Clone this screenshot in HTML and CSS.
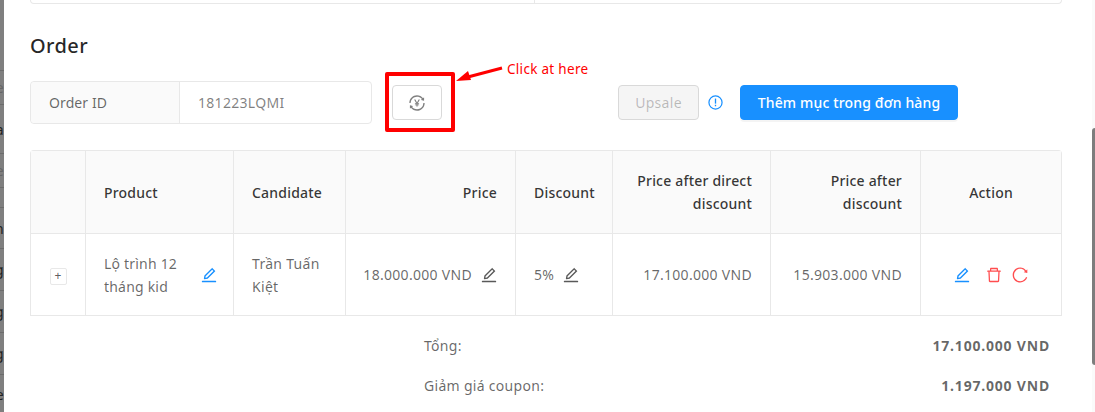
FILE: index.html
```html
<!DOCTYPE html>
<html lang="en">
<head>
    <meta charset="UTF-8">
    <meta name="viewport" content="width=device-width, initial-scale=1.0">
    <title>Order</title>
    <link rel="stylesheet" href="styles.css">
</head>
<body>
    <!-- Trang phía sau lớp phủ -->
    <div class="backdrop">
        <div class="backdrop-row r2">e</div>
        <div class="backdrop-row r1">a</div>
        <div class="backdrop-row r2">e</div>
        <div class="backdrop-row r6"></div>
        <div class="backdrop-row r3">n</div>
        <div class="backdrop-row r4">g</div>
        <div class="backdrop-row r4">g</div>
        <div class="backdrop-row r4">g</div>
        <div class="backdrop-row r5">e</div>
    </div>

    <main class="modal">
        <div class="summary-box"><div class="summary-cell first"></div><div class="summary-cell"></div></div>

        <h2 class="section-title">Order</h2>

        <div class="toolbar">
            <div class="input-group">
                <div class="input-label">Order ID</div>
                <div class="input-value">181223LQMI</div>
            </div>
            <button class="btn btn-icon">
                <svg class="icon" viewBox="64 64 896 896" fill="currentColor"><path d="M668.6 320c0-4.4-3.6-8-8-8h-54.5c-3 0-5.8 1.7-7.1 4.4l-84.7 168.8H511l-84.7-168.8a8 8 0 0 0-7.1-4.4h-55.7c-1.3 0-2.6.3-3.8 1-3.9 2.1-5.3 7-3.2 10.8l103.9 191.6h-57c-4.4 0-8 3.6-8 8v27.1c0 4.4 3.6 8 8 8h76v39h-76c-4.4 0-8 3.6-8 8v27.1c0 4.4 3.6 8 8 8h76V704c0 4.4 3.6 8 8 8h49.9c4.4 0 8-3.6 8-8v-63.5h76.3c4.4 0 8-3.6 8-8v-27.1c0-4.4-3.6-8-8-8h-76.3v-39h76.3c4.4 0 8-3.6 8-8v-27.1c0-4.4-3.6-8-8-8H564l103.7-191.6c.5-1.1.9-2.4.9-3.7zM157.9 504.2a352.7 352.7 0 0 1 103.5-242.4c32.5-32.5 70.3-58.1 112.4-75.9 43.6-18.4 89.9-27.8 137.6-27.8 47.8 0 94.1 9.3 137.6 27.8 42.1 17.8 79.9 43.4 112.4 75.9 10 10 19.3 20.5 27.9 31.4l-50 39.1a8 8 0 0 0 3 14.1l156.8 38.3c5 1.2 9.9-2.6 9.9-7.7l.8-161.5c0-6.7-7.7-10.5-12.9-6.3l-47.8 37.4C770.7 146.3 648.6 82 511.5 82 277 82 86.3 270.1 82 503.8a8 8 0 0 0 8 8.2h60c4.3 0 7.8-3.5 7.9-7.8zM934 512h-60c-4.3 0-7.9 3.5-8 7.8a353.24 353.24 0 0 1-103.5 242.4 352.57 352.57 0 0 1-112.4 75.9c-43.6 18.4-89.9 27.8-137.6 27.8s-94.1-9.3-137.6-27.8a352.57 352.57 0 0 1-112.4-75.9c-10-10-19.3-20.5-27.9-31.4l49.9-39.1a8 8 0 0 0-3-14.1l-156.8-38.3c-5-1.2-9.9 2.6-9.9 7.7l-.8 161.7c0 6.7 7.7 10.5 12.9 6.3l47.8-37.4C253.3 877.7 375.4 942 512.5 942 747 942 937.7 753.9 942 520.2a8 8 0 0 0-8-8.2z"/></svg>
            </button>
            <button class="btn btn-disabled">Upsale</button>
            <svg class="icon-info" viewBox="0 0 16 16" fill="none"><circle cx="8" cy="8" r="7" stroke="#1890ff" stroke-width="1.3"/><rect x="7.3" y="3.8" width="1.4" height="5.4" fill="#1890ff"/><rect x="7.3" y="10.4" width="1.4" height="1.6" fill="#1890ff"/></svg>
            <button class="btn btn-primary">Thêm mục trong đơn hàng</button>
        </div>

        <table class="order-table">
            <thead>
                <tr>
                    <th class="col-expand"></th>
                    <th class="col-product">Product</th>
                    <th class="col-candidate">Candidate</th>
                    <th class="col-price right">Price</th>
                    <th class="col-discount">Discount</th>
                    <th class="col-direct right">Price after direct discount</th>
                    <th class="col-after right">Price after discount</th>
                    <th class="col-action center">Action</th>
                </tr>
            </thead>
            <tbody>
                <tr>
                    <td class="center"><button class="expand-btn">+</button></td>
                    <td>
                        <div class="cell-edit between">
                            <span class="product-name">Lộ trình 12 tháng kid</span>
                            <svg class="icon blue" viewBox="64 64 896 896" fill="currentColor"><use href="#edit-icon"/></svg>
                        </div>
                    </td>
                    <td>Trần Tuấn Kiệt</td>
                    <td class="right">
                        <div class="cell-edit end">18.000.000 VND
                            <svg class="icon dark" viewBox="64 64 896 896" fill="currentColor"><use href="#edit-icon"/></svg>
                        </div>
                    </td>
                    <td>
                        <div class="cell-edit">5%
                            <svg class="icon dark" viewBox="64 64 896 896" fill="currentColor"><use href="#edit-icon"/></svg>
                        </div>
                    </td>
                    <td class="right">17.100.000 VND</td>
                    <td class="right">15.903.000 VND</td>
                    <td>
                        <div class="actions">
                            <svg class="icon blue action-edit" viewBox="64 64 896 896" fill="currentColor"><use href="#edit-icon"/></svg>
                            <svg class="icon red" viewBox="64 64 896 896" fill="currentColor"><path d="M360 184h-8c4.4 0 8-3.6 8-8v8h304v-8c0 4.4 3.6 8 8 8h-8v72h72v-80c0-35.3-28.7-64-64-64H352c-35.3 0-64 28.7-64 64v80h72v-72zm504 72H160c-17.7 0-32 14.3-32 32v32c0 4.4 3.6 8 8 8h60.4l24.7 523c1.6 34.1 29.8 61 63.9 61h454c34.2 0 62.3-26.8 63.9-61l24.7-523H888c4.4 0 8-3.6 8-8v-32c0-17.7-14.3-32-32-32zM731.3 840H292.7l-24.2-512h487l-24.2 512z"/></svg>
                            <svg class="icon red" viewBox="64 64 896 896" fill="currentColor"><path d="M909.1 209.3l-56.4 44.1C775.8 155.1 656.2 92 521.9 92 290 92 102.3 279.5 102 511.5 101.7 743.7 289.8 932 521.9 932c181.3 0 335.8-115 394.6-276.1 1.5-4.2-.7-8.9-4.9-10.3l-56.7-19.5a8 8 0 0 0-10.1 4.8c-1.8 5-3.8 10-5.9 14.9-17.3 41-42.1 77.8-73.7 109.4A344.77 344.77 0 0 1 655.9 829c-42.3 17.9-87.4 27-133.8 27-46.5 0-91.5-9.1-133.8-27A341.5 341.5 0 0 1 279 755.2a342.16 342.16 0 0 1-73.7-109.4c-17.9-42.4-27-87.4-27-133.9s9.1-91.5 27-133.9c17.3-41 42.1-77.8 73.7-109.4 31.6-31.6 68.4-56.4 109.3-73.8 42.3-17.9 87.4-27 133.8-27 46.5 0 91.5 9.1 133.8 27a341.5 341.5 0 0 1 109.3 73.8c9.9 9.9 19.2 20.4 27.8 31.4l-60.2 47a8 8 0 0 0 3 14.1l175.6 43c5 1.2 9.9-2.6 9.9-7.7l.8-180.9c-.1-6.6-7.8-10.3-13-6.2z"/></svg>
                        </div>
                    </td>
                </tr>
            </tbody>
        </table>

        <div class="totals">
            <div class="total-row"><span>Tổng:</span><strong>17.100.000 VND</strong></div>
            <div class="total-row"><span>Giảm giá coupon:</span><strong>1.197.000 VND</strong></div>
        </div>
    </main>

    <div class="scroll-track"><div class="scroll-thumb"></div></div>

    <!-- Chú thích màu đỏ vẽ đè lên ảnh chụp -->
    <div class="callout-box"></div>
    <svg class="callout-arrow" viewBox="0 0 50 20"><path d="M46 2 L10 11.5" stroke="#f00" stroke-width="3" fill="none"/><path d="M0 15 L12 5 L15 14 Z" fill="#f00"/></svg>
    <div class="callout-text">Click at here</div>

    <svg class="svg-defs"><defs><path id="edit-icon" d="M257.7 752c2 0 4-.2 6-.5L431.9 722c2-.4 3.9-1.3 5.3-2.8l423.9-423.9a9.96 9.96 0 0 0 0-14.1L694.9 114.9c-1.9-1.9-4.4-2.9-7.1-2.9s-5.2 1-7.1 2.9L256.8 538.8c-1.5 1.5-2.4 3.3-2.8 5.3l-29.5 168.2a33.5 33.5 0 0 0 9.4 29.8c6.6 6.4 14.9 9.9 23.8 9.9zm67.4-174.4L687.8 215l73.3 73.3-362.7 362.6-88.9 15.7 15.6-89zM880 836H144c-17.7 0-32 14.3-32 32v36c0 4.4 3.6 8 8 8h784c4.4 0 8-3.6 8-8v-36c0-17.7-14.3-32-32-32z"/></defs></svg>
</body>
</html>
```

FILE: styles.css
```css
* {
    box-sizing: border-box;
}
html, body {
    height: 412px;
    overflow: hidden;
}
body {
    margin: 0;
    display: flex;
    font-family: "Noto Sans", "Open Sans", sans-serif;
    font-size: 14px;
    letter-spacing: 0.3px;
    color: rgba(0, 0, 0, 0.6);
    background-color: #fff;
}

/* Lớp phủ bên trái */
.backdrop {
    width: 4px;
    flex-shrink: 0;
    background-color: #7f7f7f;
    overflow: hidden;
    padding-top: 70px;
    font-size: 14px;
    color: #222;
    display: flex;
    flex-direction: column;
    align-items: flex-end;
}
.backdrop-row {
    width: 4px;
    flex-shrink: 0;
    display: flex;
    justify-content: flex-start;
    align-items: center;
    border-top: 1px solid #6c6c6c;
    direction: rtl;
}
.r1 { height: 49px; }
.r2 { height: 34px; color: #666; }
.r3 { height: 41px; }
.r4 { height: 42px; }
.r5 { height: 40px; }
.r6 { height: 20px; }

.modal {
    flex: 1;
    min-width: 0;
    padding: 0 30px 0 26px;
}
.summary-box {
    height: 4px;
    display: flex;
    border: 1px solid #e8e8e8;
    border-top: none;
    border-radius: 0 0 4px 4px;
}
.summary-cell {
    flex: 1;
}
.summary-cell.first {
    flex: none;
    width: 504px;
    border-right: 1px solid #e8e8e8;
}
.section-title {
    margin: 28px 0 0;
    height: 28px;
    font-size: 20px;
    line-height: 28px;
    font-weight: 500;
    letter-spacing: 0.4px;
    color: rgba(0, 0, 0, 0.85);
}

/* Thanh công cụ */
.toolbar {
    margin-top: 21px;
    height: 43px;
    padding-right: 104px;
    display: flex;
    align-items: center;
}
.input-group {
    width: 342px;
    height: 43px;
    display: flex;
    border: 1px solid #e8e8e8;
    border-radius: 4px;
}
.input-label {
    width: 149px;
    padding-left: 18px;
    line-height: 42px;
    letter-spacing: 0.1px;
    background-color: #fafafa;
    border-right: 1px solid #e8e8e8;
    border-radius: 4px 0 0 4px;
}
.input-value {
    padding-left: 18px;
    line-height: 42px;
    color: rgba(0, 0, 0, 0.5);
}
.btn {
    height: 35px;
    font-family: inherit;
    font-size: 14px;
    letter-spacing: 0.3px;
    border-radius: 4px;
    padding: 0;
}
.btn-icon {
    width: 50px;
    margin-left: 20px;
    margin-right: auto;
    background-color: #fff;
    border: 1px solid #d9d9d9;
    color: rgba(0, 0, 0, 0.5);
    display: flex;
    align-items: center;
    justify-content: center;
}
.btn-disabled {
    width: 81px;
    background-color: #f5f5f5;
    border: 1px solid #d9d9d9;
    color: rgba(0, 0, 0, 0.25);
}
.icon-info {
    width: 15px;
    height: 15px;
    margin-left: 9px;
}
.btn-primary {
    width: 218px;
    margin-left: 17px;
    letter-spacing: 0.15px;
    background-color: #1890ff;
    border: 1px solid #1890ff;
    color: #fff;
    font-weight: 500;
    box-shadow: 0 2px 0 rgba(0, 0, 0, 0.045);
}
.icon {
    width: 16px;
    height: 16px;
    flex-shrink: 0;
}
.blue { color: #1890ff; }
.dark { color: rgba(0, 0, 0, 0.65); }
.red { color: #ff4d4f; }

/* Bảng đơn hàng */
.order-table {
    width: 1032px;
    margin-top: 26px;
    table-layout: fixed;
    border-collapse: separate;
    border-spacing: 0;
    border: 1px solid #e8e8e8;
    border-bottom: none;
    border-radius: 4px 4px 0 0;
}
.order-table th,
.order-table td {
    padding: 0 18px;
    line-height: 23px;
    text-align: left;
    border-right: 1px solid #e8e8e8;
    border-bottom: 1px solid #e8e8e8;
}
.order-table th:last-child,
.order-table td:last-child {
    border-right: none;
}
.order-table th {
    height: 83px;
    font-weight: 500;
    letter-spacing: 0.2px;
    background-color: #fafafa;
    color: rgba(0, 0, 0, 0.8);
}
.order-table td {
    height: 82px;
}
.order-table .right { text-align: right; }
.order-table .center { text-align: center; }
.col-expand { width: 55px; }
.col-product { width: 148px; }
.col-candidate { width: 112px; }
.col-price { width: 170px; }
.col-discount { width: 97px; }
.col-direct { width: 158px; }
.col-after { width: 150px; }
.expand-btn {
    width: 17px;
    height: 17px;
    padding: 0;
    font-family: inherit;
    font-size: 12px;
    line-height: 14px;
    color: rgba(0, 0, 0, 0.65);
    background-color: #fff;
    border: 1px solid #e8e8e8;
    border-radius: 2px;
}
.cell-edit {
    display: flex;
    align-items: center;
    gap: 9px;
}
.cell-edit.end {
    justify-content: flex-end;
    white-space: nowrap;
    margin-left: -18px;
}
.cell-edit.between {
    justify-content: space-between;
    margin-right: -2px;
}
.product-name {
    width: 82px;
    letter-spacing: 0.2px;
}
.actions {
    display: flex;
    justify-content: center;
    gap: 10px;
}
.action-edit {
    margin-right: 6px;
}

/* Tổng tiền */
.totals {
    margin-top: 9px;
    padding: 0 12px 0 394px;
}
.total-row {
    height: 40px;
    display: flex;
    align-items: center;
    justify-content: space-between;
}
.total-row strong {
    font-weight: 700;
    letter-spacing: 0.8px;
}

/* Thanh cuộn */
.scroll-track {
    width: 3px;
    flex-shrink: 0;
    background-color: #fafafa;
    padding-top: 128px;
}
.scroll-thumb {
    height: 237px;
    background-color: #7d7d7d;
    border-radius: 3px 0 0 3px;
}

/* Chú thích */
.callout-box {
    position: absolute;
    left: 385px;
    top: 72px;
    width: 70px;
    height: 60px;
    border: 4px solid #f00;
    border-radius: 2px;
}
.callout-arrow {
    position: absolute;
    left: 456px;
    top: 66px;
    width: 50px;
    height: 20px;
}
.callout-text {
    position: absolute;
    left: 507px;
    top: 60px;
    font-size: 13.5px;
    line-height: 18px;
    color: #f00;
}
.svg-defs {
    position: absolute;
    width: 0;
    height: 0;
}
```
